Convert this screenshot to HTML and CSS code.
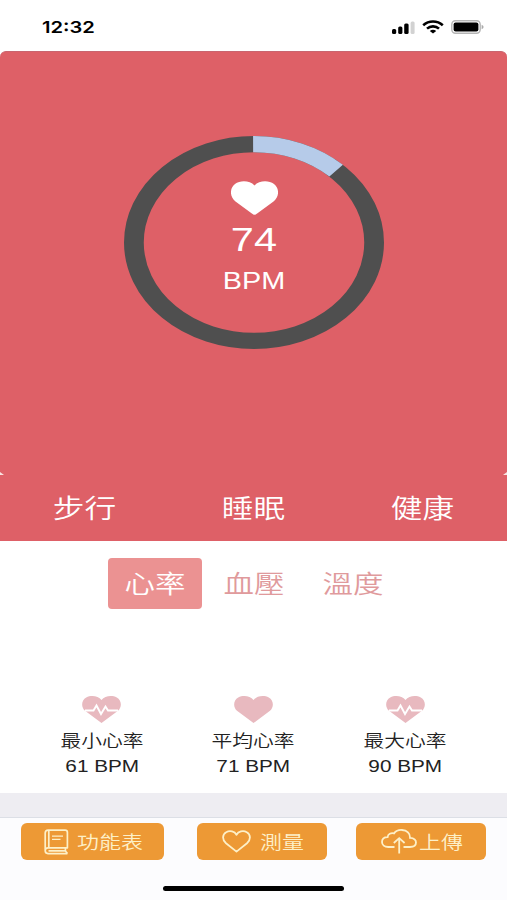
FILE: index.html
```html
<!DOCTYPE html>
<html lang="zh-Hant">
<head>
    <meta charset="UTF-8">
    <meta name="viewport" content="width=device-width, initial-scale=1.0">
    <title>心率</title>
    <link rel="stylesheet" href="styles.css">
</head>
<body>

    <div class="status-bar">
        <span class="time">12:32</span>
        <div class="status-icons">
            <svg class="signal" width="23" height="13" viewBox="0 0 23 13">
                <rect x="0" y="8" width="4.2" height="5" rx="1.5"/>
                <rect x="6.2" y="5.6" width="4.2" height="7.4" rx="1.5"/>
                <rect x="12.2" y="2.6" width="4.4" height="10.4" rx="1.5"/>
                <rect x="18.6" y="0.5" width="4" height="12.5" rx="1.5" fill="#d2d2d2"/>
            </svg>
            <svg class="wifi" width="22" height="14" viewBox="0 0 22 14" fill="none" stroke="#000" stroke-width="2.6">
                <path d="M1.2 5.2C6.8 0.2 15.2 0.2 20.8 5.2"/>
                <path d="M5 8.6C8.4 5.6 13.6 5.6 17 8.6"/>
                <path d="M11 13.6L7.8 11Q11 8.4 14.2 11Z" fill="#000" stroke="none"/>
            </svg>
            <svg class="battery" width="33" height="14" viewBox="0 0 33 14">
                <rect x="0.8" y="0.8" width="28.4" height="12.4" rx="3.6" fill="none" stroke="#b5b5b5" stroke-width="1.4"/>
                <rect x="2.6" y="2.4" width="24.8" height="9.2" rx="2"/>
                <path d="M30.6 4.8Q32.6 5.6 32.6 7T30.6 9.2Z" fill="#aaa"/>
            </svg>
        </div>
    </div>

    <div class="hero">
        <div class="gauge-area">
            <div class="gauge">
                <svg class="gauge-ring" viewBox="0 0 200 200" preserveAspectRatio="none">
                    <circle cx="100" cy="100" r="92.4" fill="none" stroke="#4f4f4f" stroke-width="15.2"/>
                    <circle cx="100" cy="100" r="92.4" fill="none" stroke="#b6cbe9" stroke-width="15.2" pathLength="100" stroke-dasharray="12 88" transform="rotate(-90 100 100)"/>
                </svg>
                <div class="gauge-info">
                    <svg width="47" height="34" viewBox="0 0 47 34" fill="#fff">
                        <path d="M23.5 33.8C22.5 33.8 21.5 33 20.5 32.2L4.5 20.5C-1.5 16 -1.5 7 4 3C9.5 -1 19 -0.4 23.5 4.4C28 -0.4 37.5 -1 43 3C48.5 7 48.5 16 42.5 20.5L26.5 32.2C25.5 33 24.5 33.8 23.5 33.8Z"/>
                    </svg>
                    <span class="wide gauge-value">74</span>
                    <span class="wide gauge-unit">BPM</span>
                </div>
            </div>
        </div>
        <div class="hero-nav">
            <span class="wide">步行</span>
            <span class="wide">睡眠</span>
            <span class="wide">健康</span>
        </div>
    </div>

    <div class="content">
        <div class="tabs">
            <div class="tab active"><span class="wide">心率</span></div>
            <div class="tab"><span class="wide">血壓</span></div>
            <div class="tab"><span class="wide">溫度</span></div>
        </div>
        <div class="stats">
            <div class="stat">
                <svg width="39" height="27" viewBox="0 0 39 27">
                    <path d="M19.5 27L3 14.8C-1.3 11 -0.6 4.2 4.2 1.5C9.4 -1.2 16.3 0 19.5 4C22.7 0 29.6 -1.2 34.8 1.5C39.6 4.2 40.3 11 36 14.8Z" fill="#e8b9bf"/>
                    <path d="M3 14.5H11.5L14.5 9.5L19 18L23.5 10.5L26 14.5H36" fill="none" stroke="#fff" stroke-width="1.9"/>
                </svg>
                <span class="wide stat-name">最小心率</span>
                <span class="wide stat-value">61 BPM</span>
            </div>
            <div class="stat">
                <svg width="39" height="27" viewBox="0 0 39 27">
                    <path d="M19.5 27L3 14.8C-1.3 11 -0.6 4.2 4.2 1.5C9.4 -1.2 16.3 0 19.5 4C22.7 0 29.6 -1.2 34.8 1.5C39.6 4.2 40.3 11 36 14.8Z" fill="#e8b9bf"/>
                </svg>
                <span class="wide stat-name">平均心率</span>
                <span class="wide stat-value">71 BPM</span>
            </div>
            <div class="stat">
                <svg width="39" height="27" viewBox="0 0 39 27">
                    <path d="M19.5 27L3 14.8C-1.3 11 -0.6 4.2 4.2 1.5C9.4 -1.2 16.3 0 19.5 4C22.7 0 29.6 -1.2 34.8 1.5C39.6 4.2 40.3 11 36 14.8Z" fill="#e8b9bf"/>
                    <path d="M3 14.5H11.5L14.5 9.5L19 18L23.5 10.5L26 14.5H36" fill="none" stroke="#fff" stroke-width="1.9"/>
                </svg>
                <span class="wide stat-name">最大心率</span>
                <span class="wide stat-value">90 BPM</span>
            </div>
        </div>
    </div>

    <div class="separator"></div>

    <div class="footer">
        <div class="toolbar">
            <button class="btn btn-menu">
                <svg width="25" height="26" viewBox="0 0 25 26" fill="none" stroke="#fdf0c8" stroke-width="1.7" stroke-linejoin="round">
                    <path d="M1.2 22V4Q1.2 1.2 4.2 1.2H21Q23.4 1.2 23.4 3.4V18.8H4Q1.2 18.8 1.2 21.6Q1.2 24.6 4 24.6H23.4"/>
                    <path d="M4.8 1.2V18.8M21.4 18.8V22L23.4 24.6M4.5 21.8H21.4"/>
                    <path d="M8 7.2H19M8 10.4H16.5" stroke-width="1.3"/>
                </svg>
                <span class="wide">功能表</span>
            </button>
            <button class="btn btn-measure">
                <svg width="29" height="23" viewBox="0 0 29 23" fill="none" stroke="#fdf0c8" stroke-width="1.8" stroke-linejoin="round">
                    <path d="M14.5 21.6L4 13.2C0 9.8 0.2 4.4 4.2 2.2C8 0.2 12.6 1.4 14.5 4.8C16.4 1.4 21 0.2 24.8 2.2C28.8 4.4 29 9.8 25 13.2Z"/>
                </svg>
                <span class="wide">測量</span>
            </button>
            <button class="btn btn-upload">
                <svg width="36" height="25" viewBox="0 0 36 25" fill="none" stroke="#fdf0c8" stroke-width="1.8">
                    <path d="M13.5 18H7.2C3.5 18 1 15.8 1 13C1 10 3.4 8.2 6.6 8.2C6.8 5 10 3.6 13 4.4C15 1.8 18 0.8 21 1C26 1.4 29.2 4.6 29 8.8C32.4 9 35 10.8 35 13.6C35 16.4 32.4 18 29 18H22.5"/>
                    <path d="M18.2 24.6V10M12.8 14L18.2 9.2L23.6 14"/>
                </svg>
                <span class="wide">上傳</span>
            </button>
        </div>
        <div class="home-indicator"></div>
    </div>

</body>
</html>
```
FILE: styles.css
```css
* {
    box-sizing: border-box;
}
body {
    margin: 0;
    height: 900px;
    display: flex;
    flex-direction: column;
    overflow: hidden;
    background-color: #fff;
    font-family: "Liberation Sans", "Noto Sans CJK TC", sans-serif;
    font-weight: 350;
}
svg {
    display: block;
}
/* the whole app is drawn with wide letters */
.wide {
    display: inline-block;
    transform: scaleX(1.22);
    white-space: nowrap;
}
.status-bar {
    height: 51px;
    padding: 3px 23px 0 42px;
    display: flex;
    justify-content: space-between;
    align-items: center;
}
.time {
    font-family: Inter, sans-serif;
    font-weight: 600;
    font-size: 16.5px;
    transform: scaleX(1.22);
    transform-origin: left;
}
.status-icons {
    display: flex;
    align-items: center;
    gap: 7px;
}
.hero {
    height: 490px;
    background-color: #de6067;
    border-top: 1px solid #c9656f;
    border-radius: 6px 6px 0 0;
}
.gauge-area {
    position: relative;
    height: 424px;
    padding: 84px 0 0 1px;
    display: flex;
    justify-content: center;
}
.gauge-area::before,
.gauge-area::after {
    content: "";
    position: absolute;
    bottom: 1px;
    width: 4px;
    height: 3px;
    background-color: #f9e3e1;
}
.gauge-area::before {
    left: 0;
    clip-path: polygon(0 0, 100% 100%, 0 100%);
}
.gauge-area::after {
    right: 0;
    clip-path: polygon(100% 0, 100% 100%, 0 100%);
}
.gauge {
    display: grid;
    width: 260px;
    height: 213px;
}
.gauge-ring,
.gauge-info {
    grid-area: 1 / 1;
    width: 260px;
    height: 213px;
}
.gauge-info {
    display: flex;
    flex-direction: column;
    align-items: center;
    padding-top: 45px;
    color: #fff;
}
.gauge-value {
    font-size: 34px;
    line-height: 38px;
    margin-top: 5px;
}
.gauge-unit {
    font-size: 24px;
    line-height: 28px;
    margin-top: 9px;
    transform: scaleX(1.2);
}
.hero-nav {
    height: 66px;
    padding-bottom: 5px;
    display: grid;
    grid-template-columns: repeat(3, 1fr);
    align-items: center;
    text-align: center;
    color: #fff;
    font-size: 26px;
}
.content {
    height: 252px;
    padding-top: 17px;
}
.tabs {
    display: flex;
    justify-content: center;
    gap: 5px;
}
.tab {
    width: 94px;
    height: 51px;
    padding: 0 0 3px 1px;
    border-radius: 4px;
    display: flex;
    justify-content: center;
    align-items: center;
    font-size: 25px;
    color: #e09a9c;
}
.tab.active {
    background-color: #eb9292;
    color: #fff;
}
.stats {
    display: grid;
    grid-template-columns: repeat(3, 1fr);
    padding: 0 26px;
    margin-top: 87px;
}
.stat {
    display: flex;
    flex-direction: column;
    align-items: center;
    color: #222;
    font-size: 17px;
}
.stat-name {
    line-height: 24px;
    margin-top: 7px;
}
.stat-value {
    line-height: 24px;
    margin-top: 1px;
}
.separator {
    height: 25px;
    background-color: #eeedf2;
    border-bottom: 1px solid #dcdfe6;
}
.footer {
    height: 82px;
    padding-top: 5px;
    background-color: #fcfcfe;
}
.toolbar {
    display: flex;
    padding-left: 21px;
}
.btn {
    height: 37px;
    padding: 0;
    border: none;
    border-radius: 6px;
    background-color: #ed9935;
    color: #fdf0c8;
    font-family: inherit;
    font-weight: inherit;
    font-size: 18px;
    display: flex;
    align-items: center;
    cursor: pointer;
}
.btn .wide {
    padding-bottom: 2px;
}
.btn-menu {
    width: 143px;
    padding-left: 23px;
    gap: 14px;
}
.btn-measure {
    width: 130px;
    margin-left: 33px;
    padding-left: 25px;
    gap: 13px;
}
.btn-upload {
    width: 130px;
    margin-left: 29px;
    padding-left: 25px;
    gap: 6px;
}
.home-indicator {
    width: 181px;
    height: 5px;
    margin: 26px auto 0;
    border-radius: 3px;
    background-color: #000;
}
```
